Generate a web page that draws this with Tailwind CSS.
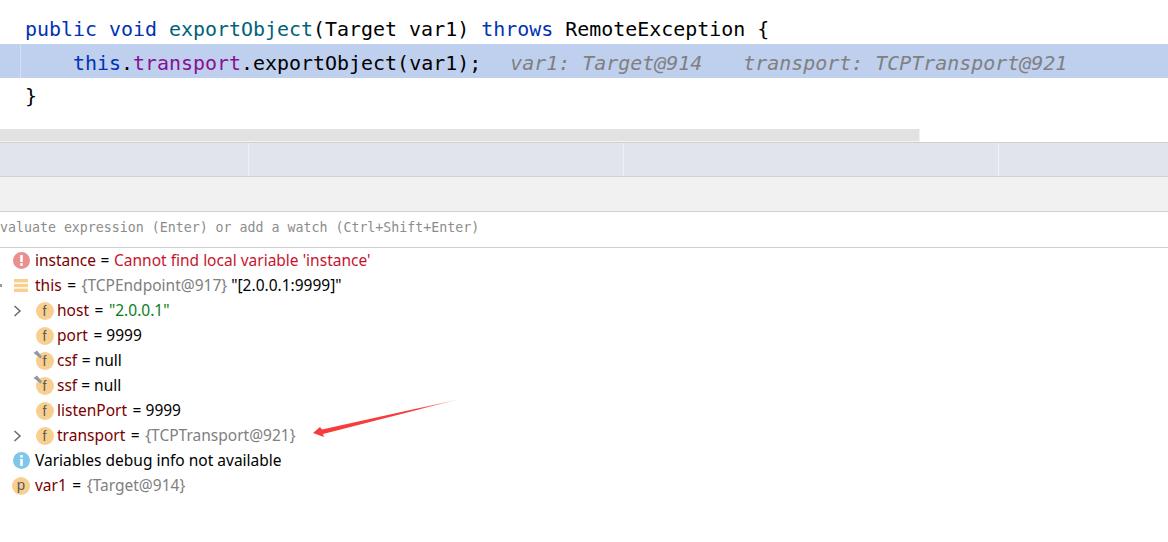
<!DOCTYPE html>
<html lang="en">
<head>
    <meta charset="UTF-8">
    <title>Debugger</title>
    <script src="https://cdn.jsdelivr.net/npm/@tailwindcss/browser@4"></script>
</head>
<body class="bg-white">
<div class="relative w-[1168px] h-[542px] overflow-hidden bg-white">
    <!-- Editor -->
    <div class="h-[129px] pt-[12px] font-['DejaVu_Sans_Mono',monospace] text-[19.95px] text-black">
        <div class="h-[32px] leading-[34px] pl-[25px] whitespace-pre"><span class="text-[#0033b3]">public void </span><span class="text-[#00627a]">exportObject</span>(Target var1) <span class="text-[#0033b3]">throws</span> RemoteException {</div>
        <div class="h-[34px] leading-[38px] bg-[#bfcfee] pl-[25px] relative whitespace-pre"><div class="absolute left-[20px] top-0 bottom-0 w-px bg-[#d6e0f3]"></div>    <span class="text-[#0033b3]">this</span>.<span class="text-[#871094]">transport</span>.exportObject(var1);  <span class="italic text-[#808080] ml-[5px]">var1: Target@914</span><span class="italic text-[#808080] ml-[41px]">transport: TCPTransport@921</span></div>
        <div class="h-[33px] leading-[36px] pl-[25px]">}</div>
    </div>
    <!-- Horizontal scrollbar -->
    <div class="h-[13px] w-[920px] bg-[#e2e2e2] border-r border-b border-[#f2f2f2]"></div>
    <!-- Tab strip -->
    <div class="h-[35px] flex bg-[#e1e4ec] border-y border-[#d1d1d1]">
        <div class="w-[249px] border-r border-[#f0f1f5]"></div>
        <div class="w-[375px] border-r border-[#f0f1f5]"></div>
        <div class="w-[375px] border-r border-[#f0f1f5]"></div>
    </div>
    <!-- Toolbar -->
    <div class="h-[35px] bg-[#f1f1f1] border-b border-[#d1d1d1]"></div>
    <!-- Watch input -->
    <div class="h-[36px] flex items-center border-b border-[#d1d1d1] font-['DejaVu_Sans_Mono',monospace] text-[13.28px] text-[#8c8c8c] overflow-hidden">
        <span class="-ml-[8px] -mt-[3px] whitespace-pre">Evaluate expression (Enter) or add a watch (Ctrl+Shift+Enter)</span>
    </div>
    <!-- Variables -->
    <div class="font-['Noto_Sans',sans-serif] text-[15.5px] text-black [&_span]:whitespace-pre">
        <div class="h-[25px] flex items-center pl-[13px]">
            <svg class="w-[17px] h-[17px] mr-[5px]" viewBox="0 0 17 17"><circle cx="8.5" cy="8.5" r="8.5" fill="#e88f8f"/><rect x="7.2" y="3" width="2.6" height="7" fill="#fff"/><rect x="7.2" y="11.2" width="2.6" height="2.6" fill="#fff"/></svg>
            <span class="text-[#7b0000]">instance</span><span class="px-[.5px]"> = </span><span class="text-[#c7142c]">Cannot find local variable 'instance'</span>
        </div>
        <div class="h-[25px] flex items-center pl-[14px] relative">
            <div class="absolute left-0 top-[11px] w-[2px] h-[3px] bg-[#999]"></div>
            <svg class="w-[14px] h-[13px] mr-[7px]" viewBox="0 0 14 13"><rect y="0" width="14" height="3.4" fill="#f8cf8e"/><rect y="4.8" width="14" height="3.4" fill="#f8cf8e"/><rect y="9.6" width="14" height="3.4" fill="#f8cf8e"/></svg>
            <span class="text-[#7b0000]">this</span><span class="px-[1.5px]"> = </span><span class="text-[#808080]">{TCPEndpoint@917}</span><span> "[2.0.0.1:9999]"</span>
        </div>
        <div class="h-[25px] flex items-center pl-[13px]">
            <svg class="w-[9px] h-[12px] mr-[13.5px]" viewBox="0 0 9 12"><path d="M1.5 1 L7 6 L1.5 11" fill="none" stroke="#6e6e6e" stroke-width="1.6"/></svg>
            <span class="w-[18px] h-[18px] mr-[3.5px] rounded-full bg-[#f8cf8e] text-[#5c5c5c] text-[14px] leading-[18px] text-center font-['Liberation_Sans',sans-serif]">f</span>
            <span class="text-[#7b0000]">host</span><span class="px-[1.5px]"> = </span><span class="text-[#067d17]">"2.0.0.1"</span>
        </div>
        <div class="h-[25px] flex items-center pl-[35.5px]">
            <span class="w-[18px] h-[18px] mr-[3.5px] rounded-full bg-[#f8cf8e] text-[#5c5c5c] text-[14px] leading-[18px] text-center font-['Liberation_Sans',sans-serif]">f</span>
            <span class="text-[#7b0000]">port</span><span class="px-[1.5px]"> = 9999</span>
        </div>
        <div class="h-[25px] flex items-center pl-[35.5px] relative">
            <span class="w-[18px] h-[18px] mr-[3.5px] rounded-full bg-[#f8cf8e] text-[#5c5c5c] text-[14px] leading-[18px] text-center font-['Liberation_Sans',sans-serif]">f</span>
            <svg class="absolute left-[33px] top-[2px] w-[10px] h-[10px]" viewBox="0 0 10 10"><path d="M0.5 3 L4 0.5 L9 6.5 L7.5 8.5 L4.5 6 Z" fill="#8f9aa5"/></svg>
            <span class="text-[#7b0000]">csf</span><span class="px-[.5px]"> = null</span>
        </div>
        <div class="h-[25px] flex items-center pl-[35.5px] relative">
            <span class="w-[18px] h-[18px] mr-[3.5px] rounded-full bg-[#f8cf8e] text-[#5c5c5c] text-[14px] leading-[18px] text-center font-['Liberation_Sans',sans-serif]">f</span>
            <svg class="absolute left-[33px] top-[2px] w-[10px] h-[10px]" viewBox="0 0 10 10"><path d="M0.5 3 L4 0.5 L9 6.5 L7.5 8.5 L4.5 6 Z" fill="#8f9aa5"/></svg>
            <span class="text-[#7b0000]">ssf</span><span> = null</span>
        </div>
        <div class="h-[25px] flex items-center pl-[35.5px]">
            <span class="w-[18px] h-[18px] mr-[3.5px] rounded-full bg-[#f8cf8e] text-[#5c5c5c] text-[14px] leading-[18px] text-center font-['Liberation_Sans',sans-serif]">f</span>
            <span class="text-[#7b0000]">listenPort</span><span class="px-[1.5px]"> = 9999</span>
        </div>
        <div class="h-[25px] flex items-center pl-[13px]">
            <svg class="w-[9px] h-[12px] mr-[13.5px]" viewBox="0 0 9 12"><path d="M1.5 1 L7 6 L1.5 11" fill="none" stroke="#6e6e6e" stroke-width="1.6"/></svg>
            <span class="w-[18px] h-[18px] mr-[3.5px] rounded-full bg-[#f8cf8e] text-[#5c5c5c] text-[14px] leading-[18px] text-center font-['Liberation_Sans',sans-serif]">f</span>
            <span class="text-[#7b0000]">transport</span><span class="px-[1.5px]"> = </span><span class="text-[#808080]">{TCPTransport@921}</span>
        </div>
        <div class="h-[25px] flex items-center pl-[13px]">
            <svg class="w-[17px] h-[17px] mr-[5px]" viewBox="0 0 17 17"><circle cx="8.5" cy="8.5" r="8.5" fill="#7fc6ea"/><rect x="7.2" y="3" width="2.6" height="2.6" fill="#fff"/><rect x="7.2" y="7" width="2.6" height="7" fill="#fff"/></svg>
            <span>Variables debug info not available</span>
        </div>
        <div class="h-[25px] flex items-center pl-[12px]">
            <span class="w-[18px] h-[18px] mr-[5px] rounded-full bg-[#f8cf8e] text-[#5c5c5c] text-[15px] leading-[16px] text-center font-['Liberation_Sans',sans-serif]">p</span>
            <span class="text-[#7b0000]">var1</span><span class="px-[1.5px]"> = </span><span class="text-[#808080]">{Target@914}</span>
        </div>
    </div>
    <!-- Annotation arrow -->
    <svg class="absolute left-0 top-0 w-[1168px] h-[542px] pointer-events-none" viewBox="0 0 1168 542">
        <defs><linearGradient id="fade" gradientUnits="userSpaceOnUse" x1="313" y1="433" x2="460" y2="399"><stop offset="0.7" stop-color="#f63c3c"/><stop offset="1" stop-color="#f63c3c" stop-opacity="0.25"/></linearGradient></defs>
        <polygon points="313,433 320,427 322,429.5 460,399 323,434 324,437" fill="url(#fade)"/>
    </svg>
</div>
</body>
</html>
